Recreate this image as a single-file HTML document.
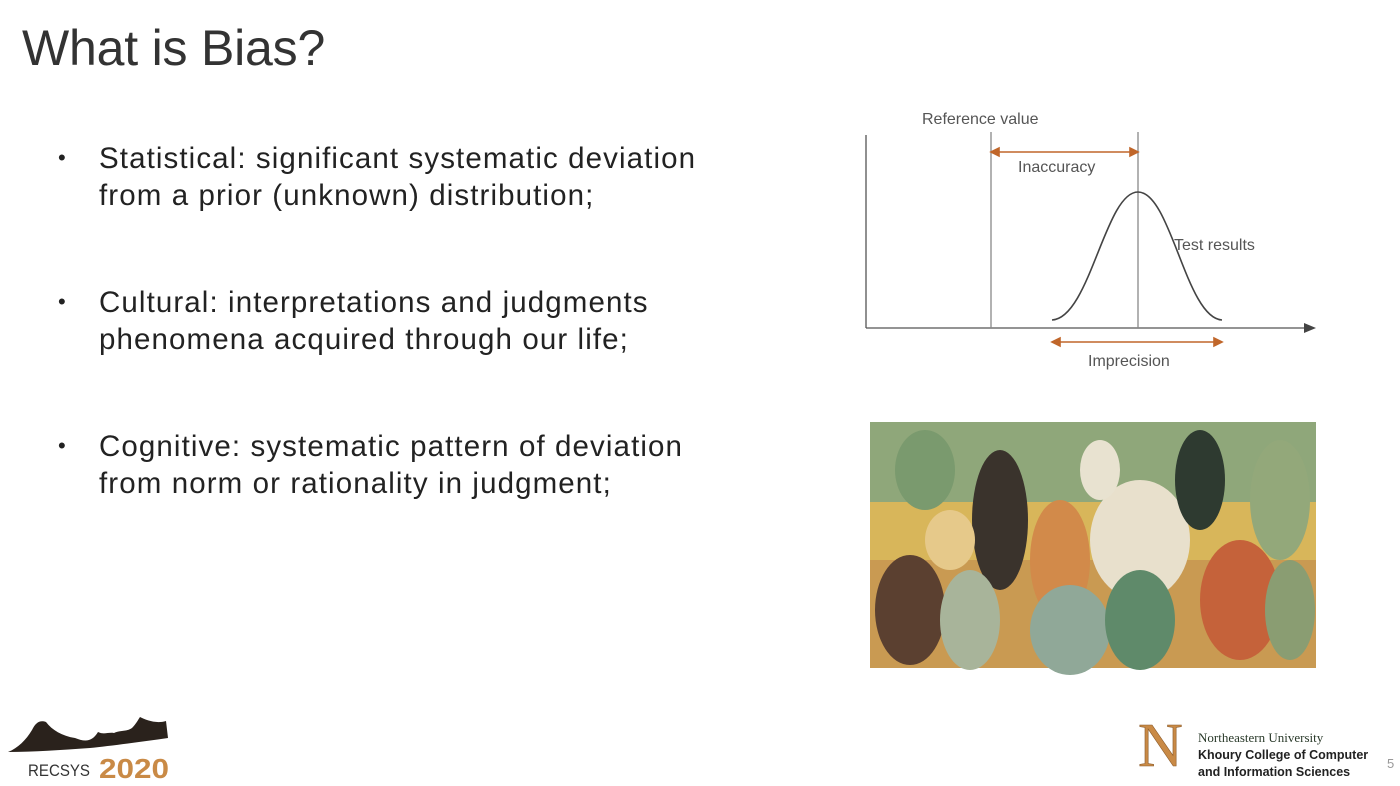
<!DOCTYPE html>
<html><head><style>
body{margin:0;width:1400px;height:786px;background:#fff;overflow:hidden;position:relative;font-family:"Liberation Sans",sans-serif;color:#222}
.t{position:absolute;left:22px;top:19px;font-size:50px;color:#333;letter-spacing:-0.2px}
.b{position:absolute;left:99px;font-size:29.5px;line-height:37px;color:#222;letter-spacing:1.1px;white-space:nowrap}
.d{position:absolute;left:58px;font-size:22px}
</style></head><body>
<div class="t">What is Bias?</div>
<div class="d" style="top:145px">•</div>
<div class="b" style="top:140px">Statistical: significant systematic deviation<br>from a prior (unknown) distribution;</div>
<div class="d" style="top:289px">•</div>
<div class="b" style="top:284px">Cultural: interpretations and judgments<br>phenomena acquired through our life;</div>
<div class="d" style="top:433px">•</div>
<div class="b" style="top:428px">Cognitive: systematic pattern of deviation<br>from norm or rationality in judgment;</div>

<svg style="position:absolute;left:0;top:0" width="1400" height="786">
<g stroke="#555" stroke-width="1.3" fill="none">
<line x1="866" y1="135" x2="866" y2="328"/>
<line x1="866" y1="328" x2="1312" y2="328"/>
<line x1="991" y1="132" x2="991" y2="328" stroke="#888"/>
<line x1="1138" y1="132" x2="1138" y2="328" stroke="#888"/>
<path d="M1052 320 C1090 318,1105 192,1138 192 C1171 192,1186 318,1222 320" stroke="#444" stroke-width="1.6"/>
</g>
<polygon points="1316,328 1304,323 1304,333" fill="#444"/>
<g stroke="#c0662a" stroke-width="1.6" fill="#c0662a">
<line x1="995" y1="152" x2="1134" y2="152"/>
<polygon points="991,152 999,148 999,156"/><polygon points="1138,152 1130,148 1130,156"/>
<line x1="1056" y1="342" x2="1218" y2="342"/>
<polygon points="1052,342 1060,338 1060,346"/><polygon points="1222,342 1214,338 1214,346"/>
</g>
<g font-size="16" fill="#555">
<text x="922" y="124">Reference value</text>
<text x="1018" y="172">Inaccuracy</text>
<text x="1174" y="250">Test results</text>
<text x="1088" y="366">Imprecision</text>
</g>
<rect x="870" y="422" width="446" height="246" fill="#d8b65a"/>
<rect x="870" y="422" width="446" height="80" fill="#8fa77a"/>
<rect x="870" y="560" width="446" height="108" fill="#c99a52"/>
<ellipse cx="925" cy="470" rx="30" ry="40" fill="#7a9a6e"/>
<ellipse cx="1000" cy="520" rx="28" ry="70" fill="#3a332c"/>
<ellipse cx="1060" cy="560" rx="30" ry="60" fill="#d28a4a"/>
<ellipse cx="1140" cy="540" rx="50" ry="60" fill="#e8e0cc"/>
<ellipse cx="1200" cy="480" rx="25" ry="50" fill="#2e3a30"/>
<ellipse cx="1280" cy="500" rx="30" ry="60" fill="#93a87a"/>
<ellipse cx="910" cy="610" rx="35" ry="55" fill="#5b4030"/>
<ellipse cx="970" cy="620" rx="30" ry="50" fill="#a8b49a"/>
<ellipse cx="1070" cy="630" rx="40" ry="45" fill="#90a898"/>
<ellipse cx="1140" cy="620" rx="35" ry="50" fill="#5f8a6a"/>
<ellipse cx="1240" cy="600" rx="40" ry="60" fill="#c5623a"/>
<ellipse cx="1290" cy="610" rx="25" ry="50" fill="#8a9d72"/>
<ellipse cx="1100" cy="470" rx="20" ry="30" fill="#e8e2d0"/>
<ellipse cx="950" cy="540" rx="25" ry="30" fill="#e6c98a"/>
<path d="M8 752 C18 748,26 740,32 730 C36 722,40 720,46 722 C52 730,62 736,75 738 C85 742,92 742,98 732 C104 735,108 732,114 733 C120 730,126 732,132 728 C136 724,138 720,140 717 C146 720,156 724,166 721 L168 738 C140 742,110 746,90 748 C60 750,35 752,8 752Z" fill="#2a221c"/>
<text x="28" y="776" font-size="17" fill="#333" textLength="62" lengthAdjust="spacingAndGlyphs">RECSYS</text>
<text x="99" y="778" font-size="28" font-weight="bold" fill="#c98a46" textLength="70" lengthAdjust="spacingAndGlyphs">2020</text>
<text x="1138" y="766" font-size="62" font-family="Liberation Serif" fill="#c98a46" stroke="#8a5a2a" stroke-width="0.6">N</text>
<text x="1198" y="742" font-size="13" font-family="Liberation Serif" fill="#2a3a2a">Northeastern University</text>
<text x="1198" y="759" font-size="12.5" font-weight="bold" fill="#222">Khoury College of Computer</text>
<text x="1198" y="776" font-size="12.5" font-weight="bold" fill="#222">and Information Sciences</text>
<text x="1387" y="768" font-size="13" fill="#999">5</text>
</svg>
</body></html>
